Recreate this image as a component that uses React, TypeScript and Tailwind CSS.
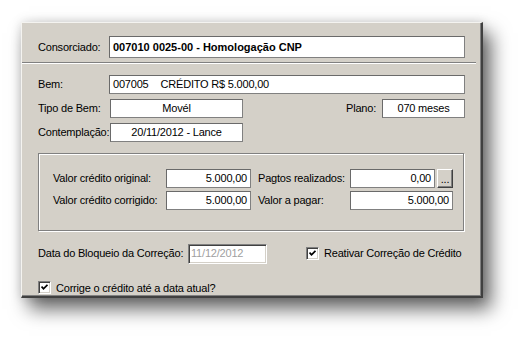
import type { ReactNode } from "react";

const font = "font-['Liberation_Sans',Arial,sans-serif]";

function Field({
  children,
  className = "",
}: {
  children?: ReactNode;
  className?: string;
}) {
  return (
    <div
      className={`flex shrink-0 items-center bg-white border border-[#808080] border-t-[#6a6a6a] border-l-[#6a6a6a] px-[3px] whitespace-pre text-black ${className}`}
    >
      {children}
    </div>
  );
}

function CheckBox() {
  return (
    <span className="flex h-[13px] w-[13px] shrink-0 items-center justify-center border border-[#808080] border-r-white border-b-white bg-white shadow-[inset_1px_1px_0_#404040,inset_-1px_-1px_0_#d4d0c8]">
      <svg width="7" height="7" viewBox="0 0 7 7">
        <path d="M0.5 2.5 L2.5 4.8 L6.5 0.8" fill="none" stroke="#000" strokeWidth="1.8" />
      </svg>
    </span>
  );
}

export default function App() {
  return (
    <div className={`h-[340px] w-[526px] bg-white pl-[21px] pt-[22px] whitespace-nowrap ${font} text-[11px] tracking-[-0.2px] text-black`}>
      <div className="flex h-[276px] w-[462px] flex-col border-t border-l border-r-2 border-b-2 border-t-[#f4f3f0] border-l-[#f4f3f0] border-r-[#404040] border-b-[#404040] bg-[#d4d0c8] pl-[16px] pr-[16px] shadow-[inset_-1px_-1px_0_#808080,8px_11px_18px_rgba(0,0,0,0.6),0_0_10px_rgba(0,0,0,0.14)]">
        {/* consorciado */}
        <div className="mt-[13px] flex h-[22px] items-center">
          <span className="w-[71px] shrink-0">Consorciado:</span>
          <Field className="h-[22px] flex-1 font-bold tracking-normal">007010 0025-00 - Homologação CNP</Field>
        </div>

        <div className="-ml-[16px] -mr-[11px] mt-[4px] h-[2px] border-t border-b border-t-[#808080] border-b-white" />

        {/* bem */}
        <div className="mt-[11px] flex h-[19px] items-center">
          <span className="w-[71px] shrink-0">Bem:</span>
          <Field className="h-[19px] flex-1">
            007005<span className="ml-[12px]">CRÉDITO R$ 5.000,00</span>
          </Field>
        </div>

        <div className="mt-[5px] flex h-[19px] items-center">
          <span className="w-[72px] shrink-0">Tipo de Bem:</span>
          <Field className="h-[19px] w-[133px] justify-center">Movél</Field>
          <span className="ml-auto mr-[6px]">Plano:</span>
          <Field className="h-[19px] w-[83px] justify-center">070 meses</Field>
        </div>

        <div className="mt-[5px] flex h-[19px] items-center">
          <span className="w-[72px] shrink-0">Contemplação:</span>
          <Field className="h-[19px] w-[133px] justify-center">20/11/2012 - Lance</Field>
        </div>

        {/* valores */}
        <div className="mt-[11px] flex h-[78px] w-[426px] flex-col gap-[3px] border border-[#808080] pl-[14px] pt-[15px] shadow-[inset_1px_1px_0_#fff,1px_1px_0_#fff]">
          <div className="flex h-[19px] items-center">
            <span className="w-[113px] shrink-0">Valor crédito original:</span>
            <Field className="h-[19px] w-[85px] justify-end">5.000,00</Field>
            <span className="ml-[7px] w-[92px] shrink-0">Pagtos realizados:</span>
            <Field className="h-[19px] w-[85px] justify-end">0,00</Field>
            <button className="ml-[2px] flex h-[19px] w-[16px] shrink-0 items-end justify-center border border-white border-r-[#404040] border-b-[#404040] bg-[#d4d0c8] pb-[2px] text-[11px] leading-none shadow-[inset_-1px_-1px_0_#808080]">
              ...
            </button>
          </div>
          <div className="flex h-[19px] items-center">
            <span className="w-[113px] shrink-0">Valor crédito corrigido:</span>
            <Field className="h-[19px] w-[85px] justify-end">5.000,00</Field>
            <span className="ml-[7px] w-[92px] shrink-0">Valor a pagar:</span>
            <Field className="h-[19px] w-[103px] justify-end">5.000,00</Field>
          </div>
        </div>

        {/* bloqueio */}
        <div className="mt-[13px] flex h-[20px] items-center">
          <span className="w-[150px] shrink-0">Data do Bloqueio da Correção:</span>
          <div className="flex h-[20px] w-[79px] shrink-0 items-center border border-[#808080] border-r-white border-b-white bg-white pl-[2px] text-[#a0a0a0] shadow-[inset_1px_1px_0_#404040,inset_-1px_-1px_0_#d4d0c8]">
            11/12/2012
          </div>
          <div className="ml-[39px] flex items-center gap-[5px]">
            <CheckBox />
            <span>Reativar Correção de Crédito</span>
          </div>
        </div>

        <div className="mt-[16px] flex items-center gap-[5px]">
          <CheckBox />
          <span>Corrige o crédito até a data atual?</span>
        </div>
      </div>
    </div>
  );
}
